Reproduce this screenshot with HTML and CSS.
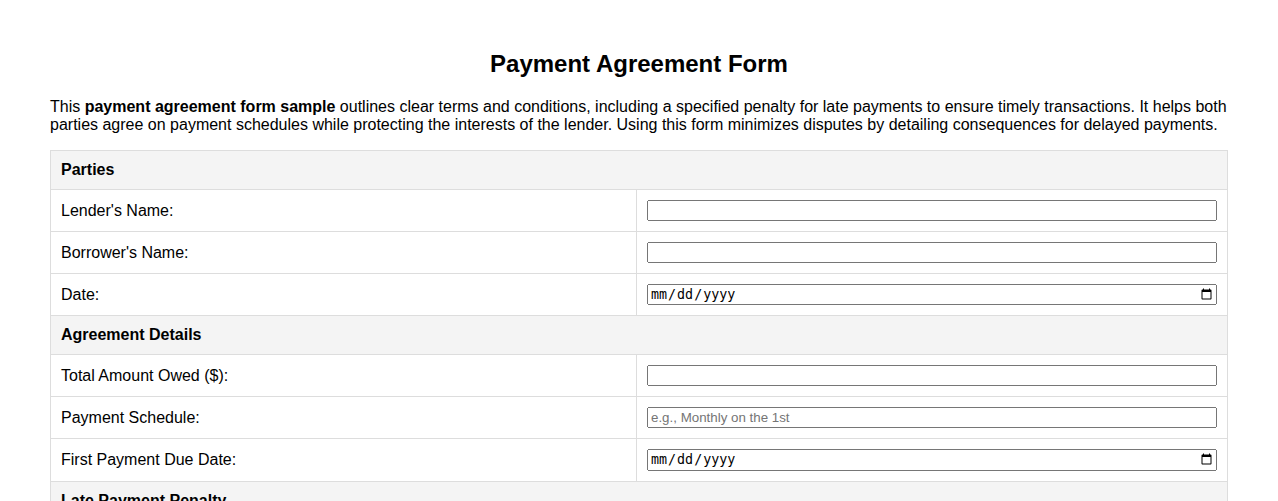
FILE: index.html
```html
<!DOCTYPE html>
<html lang="en">
<head>
<meta charset="utf-8">
<title>Payment Agreement Form</title>
<link rel="stylesheet" href="styles.css">
</head>
<body>
<div class="page">
  <h1 class="title">Payment Agreement Form</h1>
  <p class="intro">This <strong>payment agreement form sample</strong> outlines clear terms and conditions, including a specified penalty for late payments to ensure timely transactions. It helps both parties agree on payment schedules while protecting the interests of the lender. Using this form minimizes disputes by detailing consequences for delayed payments.</p>
  <form>
    <table class="form-table">
      <tr class="section"><th colspan="2">Parties</th></tr>
      <tr><td class="label">Lender's Name:</td><td class="field"><input type="text"></td></tr>
      <tr><td class="label">Borrower's Name:</td><td class="field"><input type="text"></td></tr>
      <tr><td class="label">Date:</td><td class="field"><input type="date"></td></tr>
      <tr class="section"><th colspan="2">Agreement Details</th></tr>
      <tr><td class="label">Total Amount Owed ($):</td><td class="field"><input type="number"></td></tr>
      <tr><td class="label">Payment Schedule:</td><td class="field"><input type="text" placeholder="e.g., Monthly on the 1st"></td></tr>
      <tr><td class="label">First Payment Due Date:</td><td class="field"><input type="date"></td></tr>
      <tr class="section"><th colspan="2">Late Payment Penalty</th></tr>
      <tr><td class="label">Penalty Amount ($):</td><td class="field"><input type="number"></td></tr>
    </table>
  </form>
</div>
</body>
</html>
```
FILE: styles.css
```css
html, body {
  margin: 0;
  padding: 0;
  background: #fff;
}
body {
  font-family: "Liberation Sans", Arial, sans-serif;
  color: #000;
}
.page {
  padding: 30px 50px;
}
.title {
  font-size: 24px;
  text-align: center;
  margin: 20px 0 20px;
}
.intro {
  font-size: 16px;
  margin: 0 0 16px;
  line-height: 18px;
}
.form-table {
  width: 100%;
  border-collapse: collapse;
  font-size: 16px;
}
.form-table th,
.form-table td {
  border: 1px solid #ddd;
  padding: 10px;
  text-align: left;
  vertical-align: middle;
}
.section th {
  background: #f4f4f4;
  font-weight: bold;
}
.label {
  width: 565px;
}
.field input {
  width: 100%;
  box-sizing: border-box;
  margin: 0;
}
```
